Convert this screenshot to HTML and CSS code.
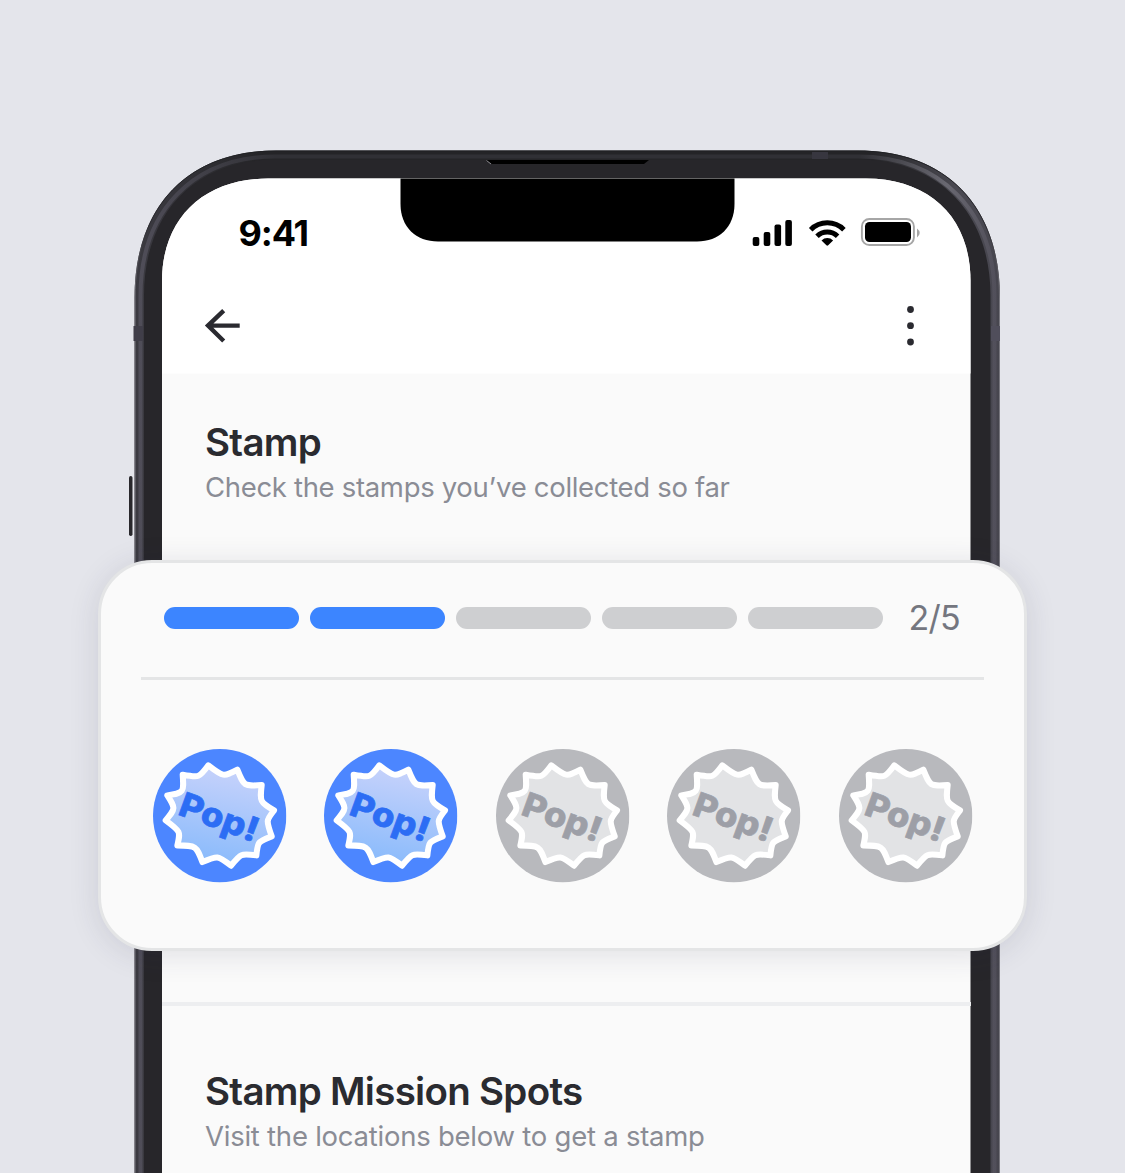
FILE: index.html
```html
<!DOCTYPE html>
<html lang="en">
<head>
<meta charset="utf-8">
<title>Stamp</title>
<link rel="stylesheet" href="styles.css">
</head>
<body>
<svg class="defs" width="0" height="0" aria-hidden="true">
  <defs>
    <linearGradient id="burst" x1="0.6" y1="0" x2="0.4" y2="1">
      <stop offset="0" stop-color="#c9d3fb"/>
      <stop offset="1" stop-color="#88bafb"/>
    </linearGradient>
    <symbol id="stamp" viewBox="24 27 400 400">
      <circle class="stamp-disc" cx="224" cy="227" r="200"/>
      <path class="stamp-burst" d="M190 76C235 111 235 111 277 89C297 139 297 139 350 135C344 185 344 185 387 211C363 241 363 241 380 289C338 305 338 305 334 346C287 340 287 340 258 377C218 346 218 346 172 366C154 317 154 317 97 316C107 274 107 274 62 241C92 205 92 205 67 166C117 158 117 158 113 104C163 113 163 113 190 76Z"/>
      <text class="stamp-text" x="0" y="0" transform="translate(95 223) rotate(20)" textLength="246" lengthAdjust="spacingAndGlyphs">Pop!</text>
    </symbol>
  </defs>
</svg>
<main class="stage">
  <svg class="device" viewBox="0 0 1125 1173" aria-hidden="true">
    <defs>
      <linearGradient id="rim" gradientUnits="userSpaceOnUse" x1="134" y1="0" x2="1000" y2="0">
        <stop offset="0" stop-color="#3c3b42"/>
        <stop offset=".15" stop-color="#242427"/>
        <stop offset=".85" stop-color="#242427"/>
        <stop offset=".95" stop-color="#4a4951"/>
        <stop offset="1" stop-color="#47464f"/>
      </linearGradient>
      <linearGradient id="edge" gradientUnits="userSpaceOnUse" x1="0" y1="150" x2="0" y2="300">
        <stop offset="0" stop-color="#1f2023"/>
        <stop offset=".5" stop-color="#2b2a2f"/>
        <stop offset="1" stop-color="#77767d"/>
      </linearGradient>
      <linearGradient id="groove" gradientUnits="userSpaceOnUse" x1="138" y1="0" x2="998" y2="0">
        <stop offset="0" stop-color="#504e59"/>
        <stop offset=".16" stop-color="#303035"/>
        <stop offset=".84" stop-color="#303035"/>
        <stop offset=".94" stop-color="#696871"/>
        <stop offset="1" stop-color="#504e59"/>
      </linearGradient>
    </defs>
    <rect x="129" y="476" width="3.500" height="60" rx="1.700" fill="#29282c"/>
    <path d="M134.500 1180V298C134.500 206 188 150.500 276 150.500H858C946 150.500 1000 206 1000 298V1180Z" fill="url(#rim)"/>
    <path d="M135 1180V298C135 206 188 151 276 151H858C946 151 999.500 206 999.500 298V1180" fill="none" stroke="url(#edge)"/>
    <path d="M140.500 1180V296C140.500 211 193 156.500 276 156.500H858C940 156.500 994.500 211 994.500 296V1180" fill="none" stroke="url(#groove)" stroke-width="4"/>
    <path d="M144 1180V296C144 212 195 159.500 276 159.500H858C938 159.500 990.500 212 990.500 296V1180Z" fill="#27262a"/>
    <rect x="133.500" y="326" width="9.500" height="15" fill="#403e49"/>
    <rect x="991" y="326" width="9" height="15" fill="#504e5b"/>
    <rect x="812" y="152" width="16" height="7" fill="#37363f"/>
    <path d="M486 160H649L644 164H492Z" fill="#000"/>
    <path d="M486.500 160.500L491 164" stroke="#8b8a90"/>
    <path d="M162 1180V281C162 217 205 178.500 268 178.500H866C929 178.500 970.500 217 970.500 281V1180Z" fill="#fafafa"/>
    <path d="M162 373.500V281C162 217 205 178.500 268 178.500H866C929 178.500 970.500 217 970.500 281V373.500Z" fill="#fff"/>
    <path d="M400.500 178.500H734.500V204C734.500 227 719 241.500 697 241.500H438C416 241.500 400.500 227 400.500 204Z" fill="#000"/>
  </svg>

  <div class="screen">
    <header class="top">
      <div class="status">
        <span class="time">9:41</span>
        <svg class="status-icons" viewBox="752 218 168 29" aria-hidden="true">
          <rect x="752.700" y="237" width="6.600" height="9" rx="2"/>
          <rect x="763.700" y="232" width="6.600" height="14" rx="2"/>
          <rect x="774.500" y="224.500" width="6.600" height="21.500" rx="2"/>
          <rect x="785.300" y="220" width="6.600" height="26" rx="2"/>
          <g fill="none" stroke="#000" stroke-width="5">
            <path d="M810.700 229.700A23.500 23.500 0 0 1 843.900 229.700"/>
            <path d="M817 236.200A14.800 14.800 0 0 1 837.600 236.200"/>
          </g>
          <path d="M821.500 240.400A8.500 8.500 0 0 1 833.100 240.400L828.200 245.300Q827.300 246.200 826.400 245.300Z"/>
          <rect x="861.900" y="219" width="52" height="26" rx="7.500" fill="none" stroke="#a6a6a6" stroke-width="1.900"/>
          <rect x="865" y="222" width="46" height="20" rx="4.500"/>
          <path d="M917 228.500Q919.700 230.500 919.700 233T917 237.500Z" fill="#a6a6a6"/>
        </svg>
      </div>
      <nav class="nav">
        <svg class="back" viewBox="204 308 37 36" aria-label="Back"><path d="M239.700 325.600H208M223.700 310.600L208 325.600L223.700 341" fill="none" stroke="#2a2a30" stroke-width="4.400"/></svg>
        <svg class="more" viewBox="906 305 9 41" aria-label="More"><circle cx="910.500" cy="309.500" r="3.400"/><circle cx="910.500" cy="325.700" r="3.400"/><circle cx="910.500" cy="342" r="3.400"/></svg>
      </nav>
    </header>
    <section class="block stamps">
      <h2 class="title">Stamp</h2>
      <p class="sub">Check the stamps you’ve collected so far</p>
    </section>
    <section class="block spots">
      <h2 class="title">Stamp Mission Spots</h2>
      <p class="sub sub-spots">Visit the locations below to get a stamp</p>
    </section>
  </div>

  <section class="card">
    <div class="progress">
      <div class="bars">
        <i class="bar done"></i><i class="bar done"></i><i class="bar"></i><i class="bar"></i><i class="bar"></i>
      </div>
      <span class="count">2/5</span>
    </div>
    <div class="row">
      <svg class="stamp active"><use href="#stamp"/></svg>
      <svg class="stamp active"><use href="#stamp"/></svg>
      <svg class="stamp"><use href="#stamp"/></svg>
      <svg class="stamp"><use href="#stamp"/></svg>
      <svg class="stamp"><use href="#stamp"/></svg>
    </div>
  </section>
</main>
</body>
</html>
```
FILE: styles.css
```css
* { box-sizing: border-box; }
body { margin: 0; background: #e4e5eb; font-family: Inter, "Liberation Sans", sans-serif; }
h2, p { margin: 0; }
svg { display: block; }
.defs { position: absolute; }

.stage { position: relative; width: 1125px; height: 1173px; overflow: hidden; padding: 178px 154px 0 162px; }
.device { position: absolute; inset: 0; width: 1125px; height: 1173px; }

.screen { position: relative; height: 995px; }
.top { height: 195px; padding: 40px 50px 0 43px; }
.status { display: flex; justify-content: space-between; height: 29px; padding-left: 33.5px; }
.time { font-size: 36px; font-weight: 650; line-height: 31px; letter-spacing: -1.1px; white-space: nowrap; }
.status-icons { width: 168px; height: 29px; margin-right: 1px; }
.nav { display: flex; justify-content: space-between; align-items: center; height: 41px; margin-top: 58px; padding-right: 6px; }
.back { width: 37px; height: 36px; margin-left: -1px; }
.more { width: 9px; height: 41px; fill: #2a2a30; }

.block { padding-left: 43px; white-space: nowrap; }
.stamps { height: 633px; padding-top: 46px; border-bottom: 4px solid #edeef0; width: 808.5px; }
.spots { padding-top: 62px; }
.title { font-size: 38.5px; font-weight: 600; line-height: 46px; letter-spacing: -.71px; color: #2a2b30; }
.sub { font-size: 27.5px; font-weight: 440; line-height: 34px; letter-spacing: -.32px; margin-top: 5px; color: #8a8c95; }
.sub-spots { letter-spacing: -.24px; }

.card {
  position: absolute; left: 98px; top: 560px; width: 929px; height: 391px;
  padding: 37px 40px 0; border: 3px solid #e4e5e6; border-radius: 54px;
  background: #fafafa; box-shadow: 0 4px 30px rgba(50, 50, 75, .13);
}
.progress {
  display: flex; justify-content: space-between; align-items: center;
  height: 80px; padding: 0 24px 42px 23px; border-bottom: 3px solid #e4e5e6;
}
.bars { display: flex; gap: 11px; }
.bar { width: 135px; height: 22px; border-radius: 11px; background: #cecfd1; }
.done { background: #3c85ff; }
.count { font-size: 34px; font-weight: 430; line-height: 36px; letter-spacing: -.7px; color: #74767f; }
.row { display: flex; justify-content: space-between; padding: 69px 12px 0; }
.stamp {
  width: 133.4px; height: 133.4px; overflow: visible;
  --disc: #b8b9bd; --burst: #e2e3e5; --ink: #9d9fa7;
}
.active { --disc: #4c86ff; --burst: url(#burst); --ink: #2c6df4; }
.stamp-disc { fill: var(--disc); }
.stamp-burst { fill: var(--burst); stroke: #fff; stroke-width: 18; stroke-linejoin: round; }
.stamp-text { fill: var(--ink); stroke: var(--ink); stroke-width: 2; font-size: 101px; font-weight: 800; }
```
